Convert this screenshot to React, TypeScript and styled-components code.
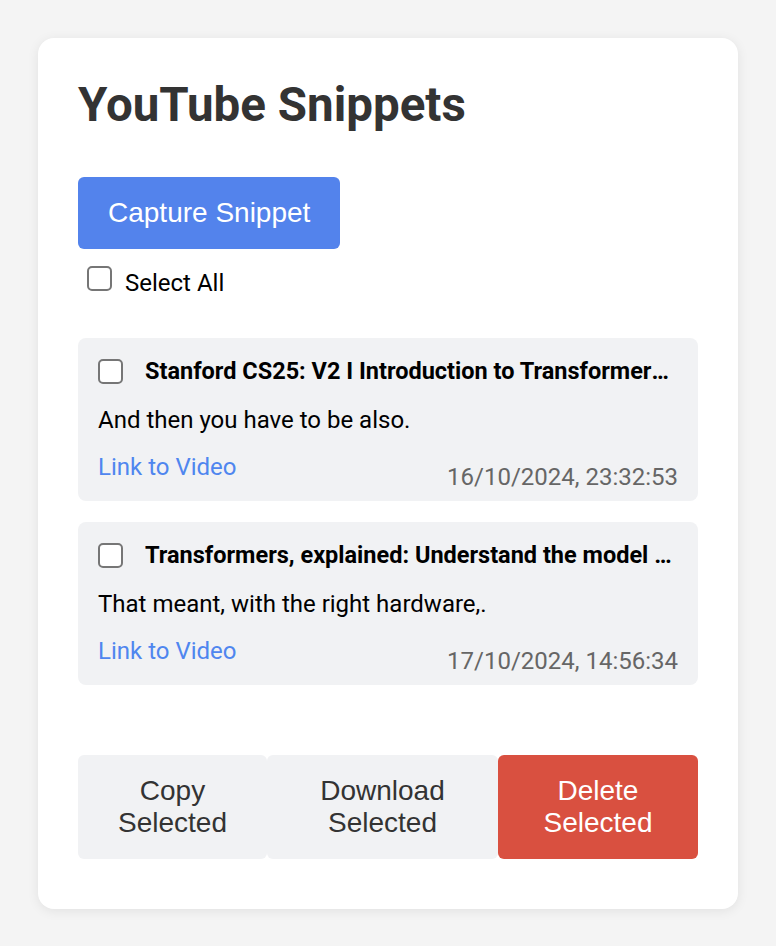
import React from 'react';
import styled, { createGlobalStyle } from 'styled-components';

const GlobalStyle = createGlobalStyle`
  html, body {
    margin: 0;
    padding: 0;
    background: #f4f4f4;
  }
  body {
    font-family: Roboto, "Noto Sans", Arial, sans-serif;
  }
  * {
    box-sizing: border-box;
  }
`;

const Page = styled.div`
  padding: 38px;
`;

const Card = styled.div`
  background: #fff;
  border-radius: 16px;
  box-shadow: 0 2px 12px rgba(0, 0, 0, 0.08);
  padding: 40px;
`;

const Title = styled.h1`
  margin: 0 0 45px;
  font-family: Roboto, Arial, sans-serif;
  font-size: 47.5px;
  font-weight: 700;
  color: #333;
  line-height: 54px;
`;

const Button = styled.button<{ $variant?: 'primary' | 'plain' | 'danger' }>`
  font-family: "Liberation Sans", Arial, sans-serif;
  font-size: 28px;
  line-height: normal;
  padding: 20px 30px;
  border: none;
  border-radius: 6px;
  cursor: pointer;
  background: ${p => p.$variant === 'primary' ? '#5383ec' : p.$variant === 'danger' ? '#d95040' : '#f1f2f4'};
  color: ${p => p.$variant === 'plain' ? '#333' : '#fff'};
`;

const Checkbox = styled.input.attrs({ type: 'checkbox' })`
  appearance: none;
  width: 25px;
  height: 25px;
  margin: 0;
  flex: none;
  border: 2px solid #767676;
  border-radius: 5px;
  background: #fff;
`;

const SelectAll = styled.label`
  display: flex;
  align-items: baseline;
  gap: 13px;
  margin-top: 17px;
  padding-left: 9px;
  font-size: 24px;
  line-height: 28px;
  color: #000;
`;

const List = styled.div`
  display: flex;
  flex-direction: column;
  gap: 21px;
  margin-top: 41px;
`;

const Snippet = styled.div`
  background: #f1f2f4;
  border-radius: 8px;
  padding: 19px 20px 10px;
`;

const SnippetHeader = styled.div`
  display: flex;
  align-items: center;
  gap: 22px;
`;

const SnippetTitle = styled.div`
  flex: 1;
  min-width: 0;
  font-size: 23.5px;
  line-height: 28px;
  font-weight: 700;
  color: #000;
  white-space: nowrap;
  overflow: hidden;
  text-overflow: ellipsis;
`;

const SnippetText = styled.p`
  margin: 21px 0 0;
  font-size: 24px;
  line-height: 28px;
  color: #000;
`;

const SnippetFooter = styled.div`
  display: flex;
  justify-content: space-between;
  align-items: flex-start;
  margin-top: 19px;
  font-size: 24px;
  line-height: 28px;
`;

const VideoLink = styled.a`
  color: #4f86ef;
  text-decoration: none;
`;

const Timestamp = styled.span`
  margin-top: 10px;
  color: #666;
`;

const Actions = styled.div`
  display: flex;
  margin: 70px 0 10px;
`;

const snippets = [
  {
    title: 'Stanford CS25: V2 I Introduction to Transformers w/ Andrej Karpathy',
    text: 'And then you have to be also.',
    time: '16/10/2024, 23:32:53',
  },
  {
    title: 'Transformers, explained: Understand the model behind GPT, BERT, and T5',
    text: 'That meant, with the right hardware,.',
    time: '17/10/2024, 14:56:34',
  },
];

export default function App() {
  return (
    <>
      <GlobalStyle />
      <Page>
        <Card>
          <Title>YouTube Snippets</Title>
          <Button $variant="primary">Capture Snippet</Button>
          <SelectAll>
            <Checkbox />
            Select All
          </SelectAll>
          <List>
            {snippets.map(s => (
              <Snippet key={s.time}>
                <SnippetHeader>
                  <Checkbox />
                  <SnippetTitle>{s.title}</SnippetTitle>
                </SnippetHeader>
                <SnippetText>{s.text}</SnippetText>
                <SnippetFooter>
                  <VideoLink href="#">Link to Video</VideoLink>
                  <Timestamp>{s.time}</Timestamp>
                </SnippetFooter>
              </Snippet>
            ))}
          </List>
          <Actions>
            <Button $variant="plain">Copy Selected</Button>
            <Button $variant="plain">Download Selected</Button>
            <Button $variant="danger">Delete Selected</Button>
          </Actions>
        </Card>
      </Page>
    </>
  );
}
